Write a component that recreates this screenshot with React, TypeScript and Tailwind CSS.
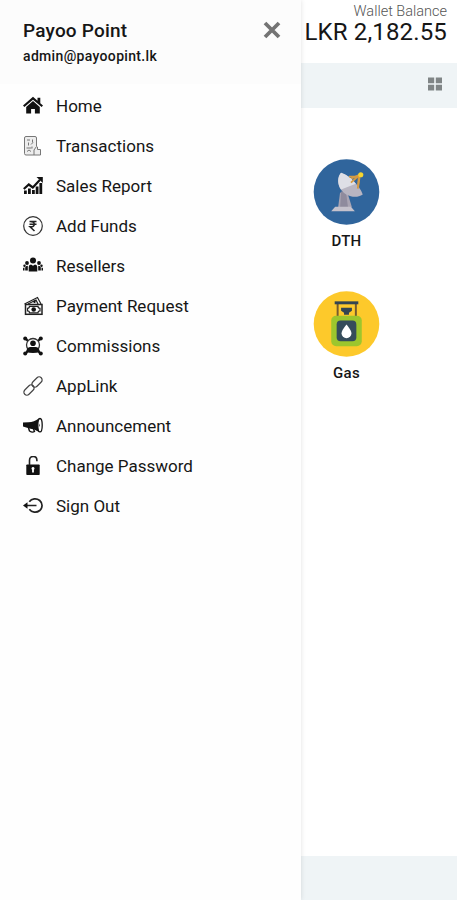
import type { ReactNode } from 'react'

function Icon({ children }: { children: ReactNode }) {
  return (
    <svg className="size-5 shrink-0" viewBox="0 0 20 20" fill="#111">
      {children}
    </svg>
  )
}

function HomeIcon() {
  return (
    <Icon>
      <path d="M10 .8 0 9.6l1.400 1.500L10 3.700l8.600 7.400L20 9.600l-2.700-2.400V1.800h-2.800v3z" />
      <path d="M10 5 3.200 10.900v6.700h4.900v-4.700h3.800v4.700h4.900v-6.700z" />
    </Icon>
  )
}

function TransactionsIcon() {
  return (
    <Icon>
      <g fill="none" stroke="#777" strokeWidth="1">
        <path d="M11 19H3q-1.500 0-1.500-1.500V2Q1.500.5 3 .5h9q1.500 0 1.500 1.500v8" fill="#ededed" />
        <path d="M4 4h3M9.500 3.500v3M5.500 6.500v3M8 8.500l2-2M3.500 12h5M4 15.500l2-1.500 2 1.500M9 10.500v2" />
        <path d="M11 19v-5l2.500-3.500 1 .5v2.500h3V19z" fill="#ededed" />
      </g>
    </Icon>
  )
}

function SalesIcon() {
  return (
    <Icon>
      <path d="M1 14.500h2.800V18H1zM5 12.500h2.800V18H5zM9 14h2.800v4H9zM12.700 10.500h2.800V18h-2.800zM16.400 7h2.800v11h-2.800z" />
      <path d="m.8 13 5-4.500 4 3 7-7.500" fill="none" stroke="#111" strokeWidth="2.200" />
      <path d="M13.500 1h6.300v6z" />
    </Icon>
  )
}

function FundsIcon() {
  return (
    <Icon>
      <circle cx="10" cy="10" r="9.300" fill="none" stroke="#333" strokeWidth="1.200" />
      <path d="M6.500 5.500h7M6.500 8.300h7M7.500 5.500c5 0 5 5.300 0 5.300H7l4.500 4.200" fill="none" stroke="#222" strokeWidth="1.500" />
    </Icon>
  )
}

function ResellersIcon() {
  return (
    <Icon>
      <circle cx="10" cy="4.500" r="3" />
      <circle cx="4" cy="7" r="1.900" />
      <circle cx="16" cy="7" r="1.900" />
      <circle cx="1.500" cy="9.800" r="1.200" />
      <circle cx="18.500" cy="9.800" r="1.200" />
      <path d="M5.700 15.500V11q0-2.500 2.300-2.500l2 1.200 2-1.200q2.300 0 2.300 2.500v4.500z" />
      <path d="M2.200 14.500v-3q0-1.800 2.600-1.800v4.800zM17.800 14.500v-3q0-1.800-2.600-1.800v4.800zM0 14.500v-2q0-1 1.500-1v3zM20 14.500v-2q0-1-1.500-1v3z" />
    </Icon>
  )
}

function PaymentIcon() {
  return (
    <Icon>
      <g fill="none" stroke="#222" strokeWidth="1.200">
        <path d="M1.500 8 14.500 1.500 18 8" />
        <path d="m5 8 8-4 2 4" />
        <rect x="2.500" y="8.500" width="16.500" height="9.800" strokeWidth="1.500" />
        <path d="M4.500 12.300q2 0 2-2H15q0 2 2 2v2.500q-2 0-2 2H6.500q0-2-2-2z" />
      </g>
      <circle cx="10.700" cy="13.500" r="2.300" />
      <circle cx="11.500" cy="5.700" r="1.200" />
    </Icon>
  )
}

function CommissionsIcon() {
  return (
    <Icon>
      <path d="m2 2 16 16M18 2 2 18" stroke="#111" strokeWidth="2.200" />
      <circle cx="2.200" cy="2.400" r="2" />
      <circle cx="17.800" cy="2.400" r="2" />
      <circle cx="2.200" cy="17.600" r="2" />
      <circle cx="17.800" cy="17.600" r="2" />
      <circle cx="10" cy="9" r="6.500" fill="#fff" stroke="#333" strokeWidth="1.300" />
      <circle cx="10" cy="7.300" r="2.800" />
      <path d="M3 16q1-5 4.500-5h5q3.500 0 4.500 5-7 2-14 0z" />
    </Icon>
  )
}

function LinkIcon() {
  return (
    <Icon>
      <g fill="none" stroke="#444" strokeWidth="1.200">
        <rect x="-6" y="-3" width="12" height="6" rx="3" transform="translate(14 6) rotate(-45)" />
        <rect x="-6" y="-3" width="12" height="6" rx="3" transform="translate(6 14) rotate(-45)" />
      </g>
    </Icon>
  )
}

function AnnouncementIcon() {
  return (
    <Icon>
      <path d="M0 6.500 5.500 6.200Q11 6 16 2.200V16Q11 12.800 6.500 12.500L0 10.500z" />
      <ellipse cx="17" cy="9.200" rx="2.200" ry="6.700" fill="#fff" stroke="#111" strokeWidth="1.300" />
      <path d="M16 7.500q1.500 1.700 0 3.500z" />
      <path d="m5.500 12 1 3q3 2 5 .5l-1-2.500" fill="none" stroke="#111" strokeWidth="1.400" />
    </Icon>
  )
}

function PasswordIcon() {
  return (
    <Icon>
      <rect x="3.300" y="8.500" width="13.400" height="10.500" rx=".8" />
      <path d="M6.500 9V4.500q0-4 3.700-4t3.700 4v.7" fill="none" stroke="#222" strokeWidth="1.600" />
      <path d="M10 11a1.500 1.500 0 0 1 .9 2.700v2.800H9.100v-2.800A1.500 1.500 0 0 1 10 11z" fill="#fff" />
    </Icon>
  )
}

function SignOutIcon() {
  return (
    <Icon>
      <path d="M6.300 5.700a7 6.700 0 1 1 0 7.600M3 9.500h10.500" fill="none" stroke="#222" strokeWidth="1.700" />
      <path d="M0 9.500 4.500 6.200v6.600z" />
    </Icon>
  )
}

const menu = [
  { label: 'Home', icon: HomeIcon },
  { label: 'Transactions', icon: TransactionsIcon },
  { label: 'Sales Report', icon: SalesIcon },
  { label: 'Add Funds', icon: FundsIcon },
  { label: 'Resellers', icon: ResellersIcon },
  { label: 'Payment Request', icon: PaymentIcon },
  { label: 'Commissions', icon: CommissionsIcon },
  { label: 'AppLink', icon: LinkIcon },
  { label: 'Announcement', icon: AnnouncementIcon },
  { label: 'Change Password', icon: PasswordIcon },
  { label: 'Sign Out', icon: SignOutIcon },
]

function Sidebar() {
  return (
    <aside className="z-10 flex w-[301px] shrink-0 flex-col bg-[#fefefe] shadow-[0_0_5px_rgba(0,0,0,0.12)]">
      <div className="flex h-[84px] items-start justify-between bg-[#fcfcfc] pt-[19px] pr-5 pl-[23px]">
        <div>
          <h1 className="text-[19px] leading-6 font-medium tracking-[0.2px]">Payoo Point</h1>
          <p className="mt-[3px] text-[14px] leading-5 font-medium tracking-[0.33px]">admin@payoopint.lk</p>
        </div>
        <svg className="mt-[2px] size-[18px]" viewBox="0 0 18 18">
          <path d="m2 2 14 14M16 2 2 16" stroke="#747474" strokeWidth="3.800" />
        </svg>
      </div>
      <ul className="mt-[2px]">
        {menu.map(({ label, icon: MenuIcon }) => (
          <li key={label} className="flex h-10 items-center gap-[13px] pl-[23px] text-[17px]">
            <MenuIcon />
            <span className="pt-px">{label}</span>
          </li>
        ))}
      </ul>
    </aside>
  )
}

function DishIcon() {
  return (
    <svg className="size-[67px]" viewBox="0 0 67 67">
      <circle cx="33.500" cy="33.500" r="33.300" fill="#30659c" />
      <path d="m27 34-2 15h14l-4-13z" fill="#aaa5b3" />
      <path d="M28 33h5l2 16h-8z" fill="#8f8b9d" />
      <path d="M22 48.500h16l4 4.500H18z" fill="#c5c2cc" />
      <path d="m33 22 14-6-2 14" fill="none" stroke="#d59a42" strokeWidth="2" />
      <path d="M28 14c7 2 19 13 22 22-7 5-18 2-23-6-3-6-2-13 1-16z" fill="#b8b5c1" />
      <path d="M28 14c6 2 11 6 15 11L28 31c-4-5-4-13 0-17z" fill="#dedfe6" />
      <path d="M36 18h10l-1 12M38 24l9-8" fill="none" stroke="#d59a42" strokeWidth="1.800" />
      <circle cx="48" cy="16" r="2.600" fill="#f6d52e" />
    </svg>
  )
}

function GasIcon() {
  return (
    <svg className="size-[67px]" viewBox="0 0 67 67">
      <circle cx="33.500" cy="33.500" r="33.300" fill="#fdc92b" />
      <path d="M24.500 26V12.500M43 26V12.500" stroke="#755b2e" strokeWidth="2" />
      <path d="M21.500 12h24" stroke="#334552" strokeWidth="3" />
      <path d="M28 17h11v3l-3 2v2h-5v-2l-3-2z" fill="#334552" />
      <rect x="18" y="25" width="31" height="31" rx="5" fill="#9dc62d" />
      <rect x="23.500" y="30" width="20" height="21" rx="4" fill="#354c5b" />
      <path d="M33.500 34q5 6 5 9a5 5 0 0 1-10 0q0-3 5-9z" fill="#fff" />
    </svg>
  )
}

export default function App() {
  return (
    <div className="flex h-[900px] w-[457px] overflow-hidden bg-white font-['Roboto',sans-serif] text-[#161616]">
      <Sidebar />
      <main className="flex min-w-0 flex-1 flex-col">
        <header className="flex h-[63px] flex-col items-end pt-1 pr-[10px] whitespace-nowrap">
          <span className="text-[14.500px] leading-[15px] font-light text-[#555]">Wallet Balance</span>
          <span className="mt-px text-[24px] leading-6 tracking-[0.15px]">LKR 2,182.55</span>
        </header>
        <div className="flex h-[45px] items-center justify-end bg-[#eff4f6] pr-[15px] pb-[3px]">
          <svg className="size-[14px]" viewBox="0 0 14 14" fill="#808586">
            <path d="M0 .5h6.200v5.700H0zM7.800.5H14v5.700H7.800zM0 7.800h6.200v5.700H0zM7.800 7.800H14v5.700H7.800z" />
          </svg>
        </div>
        <div className="flex flex-1 flex-col items-start gap-10 pt-[51px] pl-3 text-[15px] font-medium">
          <div className="flex h-[92px] flex-col items-center">
            <DishIcon />
            <span className="mt-[6px] leading-5 tracking-[0.2px]">DTH</span>
          </div>
          <div className="flex h-[92px] flex-col items-center">
            <GasIcon />
            <span className="mt-[6px] leading-5 tracking-[0.3px]">Gas</span>
          </div>
        </div>
        <footer className="h-11 bg-[#eff4f6]" />
      </main>
    </div>
  )
}
